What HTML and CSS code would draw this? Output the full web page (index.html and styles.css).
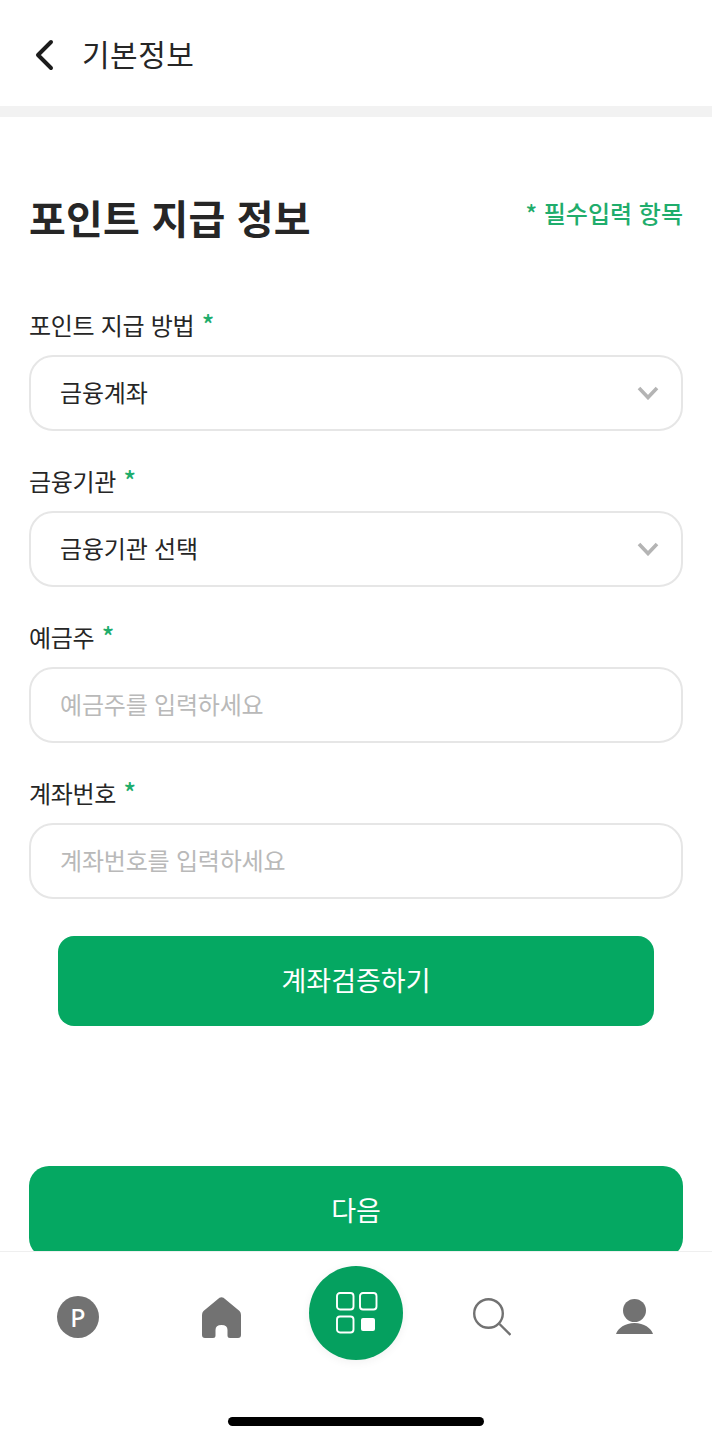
FILE: index.html
```html
<!DOCTYPE html>
<html lang="ko">
<head>
  <meta charset="utf-8">
  <title>기본정보</title>
  <link rel="stylesheet" href="styles.css">
</head>
<body>
  <div class="screen">
    <header class="topbar">
      <svg class="back-icon" width="22" height="32" viewBox="0 0 22 32"><path d="M18 3 L5 16 L18 29" fill="none" stroke="#1c1c1c" stroke-width="4" stroke-linecap="round" stroke-linejoin="round"/></svg>
      <h1 class="topbar-title">기본정보</h1>
    </header>
    <div class="divider"></div>

    <main class="content">
      <div class="title-row">
        <h2 class="page-title">포인트 지급 정보</h2>
        <span class="required-note">* 필수입력 항목</span>
      </div>

      <div class="field">
        <label class="field-label">포인트 지급 방법 <span class="star">*</span></label>
        <div class="select-box">
          <span>금융계좌</span>
          <svg width="22" height="14" viewBox="0 0 22 14"><path d="M2 2 L11 11.5 L20 2" fill="none" stroke="#b4b4b4" stroke-width="3.6"/></svg>
        </div>
      </div>

      <div class="field">
        <label class="field-label">금융기관 <span class="star">*</span></label>
        <div class="select-box">
          <span>금융기관 선택</span>
          <svg width="22" height="14" viewBox="0 0 22 14"><path d="M2 2 L11 11.5 L20 2" fill="none" stroke="#b4b4b4" stroke-width="3.6"/></svg>
        </div>
      </div>

      <div class="field">
        <label class="field-label" for="holder">예금주 <span class="star">*</span></label>
        <input class="text-input" id="holder" type="text" placeholder="예금주를 입력하세요">
      </div>

      <div class="field">
        <label class="field-label" for="account">계좌번호 <span class="star">*</span></label>
        <input class="text-input" id="account" type="text" placeholder="계좌번호를 입력하세요">
      </div>

      <button class="btn btn-verify">계좌검증하기</button>
      <button class="btn btn-next">다음</button>
    </main>

    <nav class="bottom-nav">
      <div class="nav-item">
        <span class="point-icon">P</span>
      </div>
      <div class="nav-item">
        <svg width="39" height="41" viewBox="0 0 39 41"><path d="M17.5 .8 Q19.5 -.5 21.5 .8 L37.5 14 Q39 15.5 39 18 V38 Q39 41 36 41 H28 Q25.5 41 25.5 38.5 V33 Q25.5 28 19.5 28 Q13.5 28 13.5 33 V38.5 Q13.5 41 11 41 H3 Q0 41 0 38 V18 Q0 15.5 1.5 14 Z" fill="#727272"/></svg>
      </div>
      <div class="nav-item nav-center">
        <span class="center-btn">
          <svg class="grid-icon" width="42" height="42" viewBox="0 0 42 42">
            <rect x="1" y="1" width="16.5" height="16.5" rx="3" fill="none" stroke="#fff" stroke-width="1.9"/>
            <rect x="24" y="1" width="16.5" height="16.5" rx="3" fill="none" stroke="#fff" stroke-width="1.9"/>
            <rect x="1" y="24.5" width="16.5" height="16" rx="3" fill="none" stroke="#fff" stroke-width="1.9"/>
            <rect x="25" y="26" width="14" height="13" rx="2" fill="#fff"/>
          </svg>
        </span>
      </div>
      <div class="nav-item">
        <svg width="38" height="40" viewBox="0 0 38 40"><circle cx="15.5" cy="16.5" r="14.3" fill="none" stroke="#727272" stroke-width="2.4"/><path d="M26.5 27 L37.5 38" fill="none" stroke="#727272" stroke-width="2.4"/></svg>
      </div>
      <div class="nav-item">
        <svg width="37" height="40" viewBox="0 0 37 40"><circle cx="18.5" cy="13.5" r="11.5" fill="#727272"/><path d="M0 37 C2 31 9 26 18.5 26 C28 26 35 31 37 37 Z" fill="#727272"/></svg>
      </div>
    </nav>
    <div class="home-bar"></div>
  </div>
</body>
</html>
```

FILE: styles.css
```css
/* Global styles */
* {
  box-sizing: border-box;
}

body {
  margin: 0;
  background-color: #fff;
  color: #262626;
  font-family: "Noto Sans CJK KR", "Noto Sans", sans-serif;
}

.screen {
  position: relative;
  width: 712px;
  height: 1440px;
  overflow: hidden;
  background-color: #fff;
}

/* header */
.topbar {
  display: flex;
  align-items: center;
  height: 106px;
  padding-left: 33px;
}

.back-icon {
  margin-right: 27px;
  margin-top: 3px;
}

.topbar-title {
  margin: 0;
  font-size: 30px;
  font-weight: 400;
  line-height: 1;
  letter-spacing: 0.5px;
}

.divider {
  height: 11px;
  background-color: #f2f2f2;
}

/* form */
.content {
  padding: 70px 29px 0;
}

.title-row {
  display: flex;
  justify-content: space-between;
  align-items: flex-start;
  height: 60px;
  margin-bottom: 57px;
}

.page-title {
  margin: 0;
  font-size: 40px;
  font-weight: 700;
  line-height: 60px;
  letter-spacing: 0.2px;
}

.required-note {
  color: #1fad6c;
  font-size: 24px;
  font-weight: 500;
  line-height: 52px;
}

.field {
  height: 156px;
}

.field-label {
  display: block;
  height: 51px;
  font-size: 24px;
  line-height: 39px;
  letter-spacing: -0.3px;
}

.star {
  color: #1fad6c;
  font-size: 26px;
  font-weight: 500;
  margin-left: 1px;
}

.select-box,
.text-input {
  width: 100%;
  height: 76px;
  padding: 0 22px 3px 29px;
  border: 2px solid #e6e6e6;
  border-radius: 24px;
  background-color: #fff;
  font-family: inherit;
  font-size: 24px;
  letter-spacing: -0.2px;
  color: #262626;
}

.select-box {
  display: flex;
  justify-content: space-between;
  align-items: center;
}

.select-box svg {
  margin-top: 3px;
}

.text-input {
  outline: none;
}

.text-input::placeholder {
  color: #b9b9b9;
  opacity: 1;
}

.btn {
  display: block;
  padding: 0 0 4px;
  border: none;
  background-color: #05a862;
  color: #fff;
  font-family: inherit;
  text-align: center;
}

.btn-verify {
  width: 596px;
  height: 90px;
  margin: 8px auto 0;
  border-radius: 16px;
  font-size: 27px;
  font-weight: 400;
}

.btn-next {
  width: 654px;
  height: 92px;
  margin-top: 140px;
  padding-bottom: 6px;
  border-radius: 20px;
  font-size: 27px;
  font-weight: 400;
}

/* bottom navigation, lies over the next button */
.bottom-nav {
  position: absolute;
  left: 0;
  right: 0;
  bottom: 0;
  height: 189px;
  display: grid;
  grid-template-columns: 156px 130px 140px 132px 152px;
  align-items: start;
  padding-top: 44px;
  background-color: #fff;
  border-top: 1px solid #efefef;
}

.nav-item {
  display: flex;
  justify-content: center;
  align-items: center;
  height: 42px;
}

.point-icon {
  display: flex;
  justify-content: center;
  align-items: center;
  width: 42px;
  height: 42px;
  border-radius: 50%;
  background-color: #727272;
  color: #fff;
  font-family: "Noto Sans", sans-serif;
  font-size: 25px;
  font-weight: 500;
}

.center-btn {
  display: flex;
  justify-content: center;
  align-items: center;
  flex: none;
  width: 94px;
  height: 94px;
  margin-top: -8px;
  border-radius: 50%;
  background-color: #05a05f;
  box-shadow: 0 2px 10px rgba(0, 0, 0, 0.06);
}

.grid-icon {
  margin-left: 1px;
}

.home-bar {
  position: absolute;
  left: 228px;
  bottom: 14px;
  width: 256px;
  height: 9px;
  border-radius: 5px;
  background-color: #000;
}
```
